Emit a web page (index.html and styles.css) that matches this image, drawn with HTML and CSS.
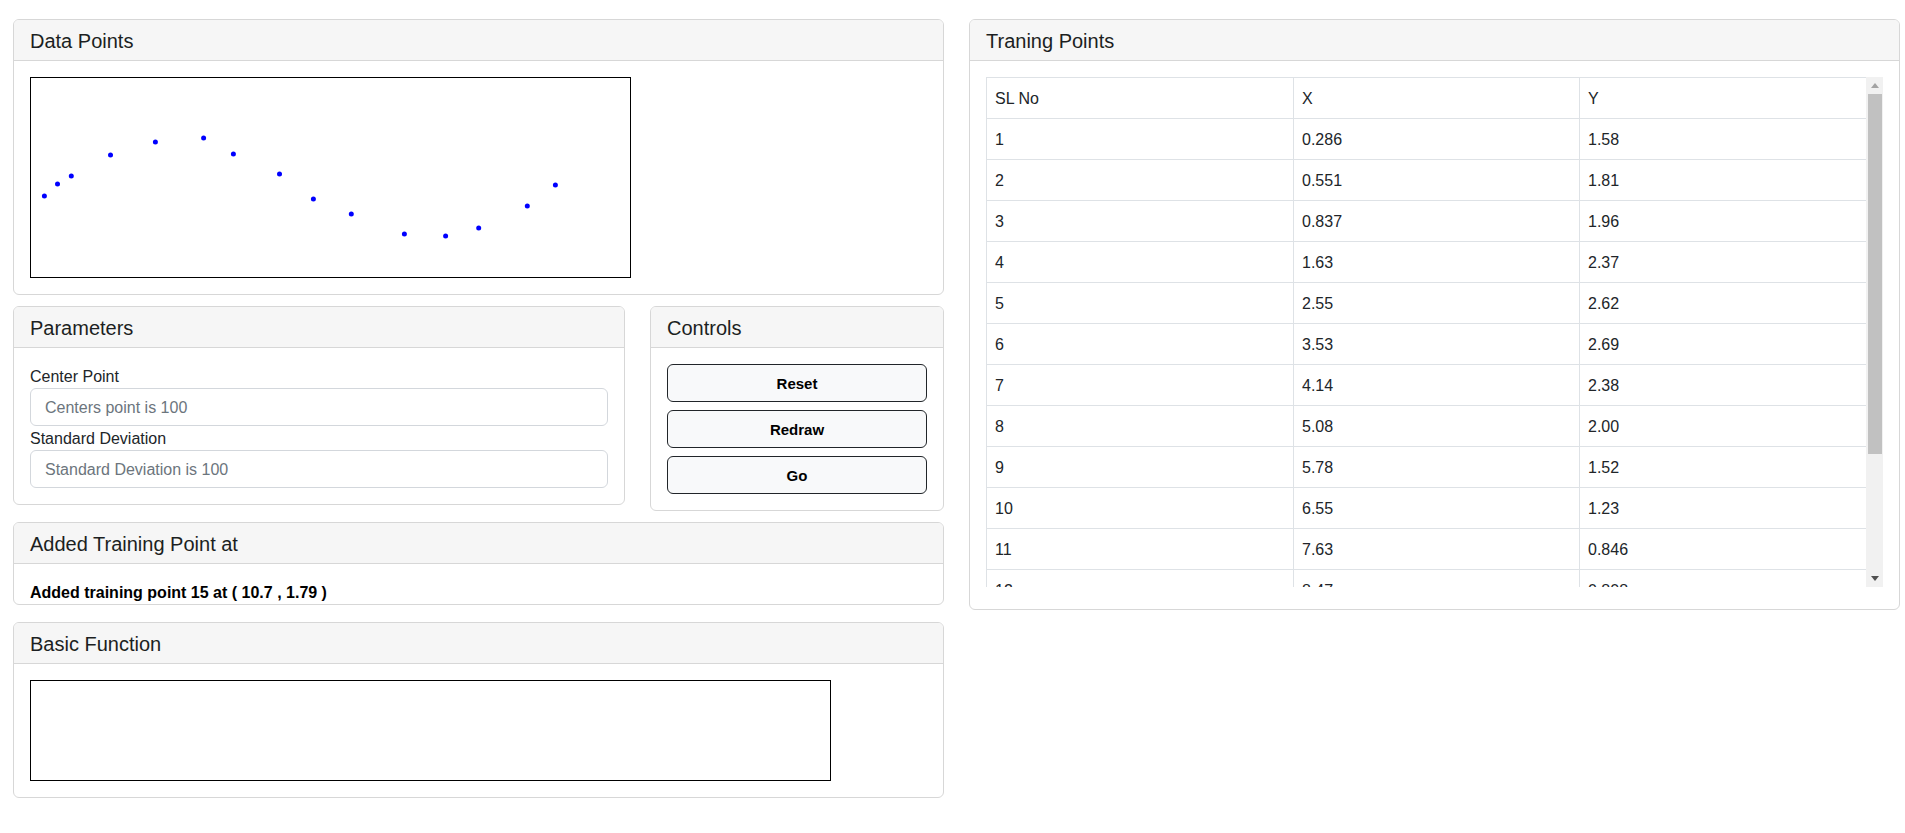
FILE: index.html
```html
<!DOCTYPE html>
<html lang="en">
<head>
<meta charset="utf-8">
<title>RBF Network</title>
<link rel="stylesheet" href="styles.css">
</head>
<body>
<div class="page">
  <div class="col col-left">
    <div class="card card-data">
      <div class="card-header"><h5 class="card-title">Data Points</h5></div>
      <div class="card-body">
        <div class="canvas canvas-data">
          <svg class="plot" width="599" height="199" viewBox="0 0 599 199">
            <g fill="#0000ff">
              <circle cx="13.4" cy="118" r="2.5"/>
              <circle cx="26.5" cy="106" r="2.5"/>
              <circle cx="40.3" cy="98" r="2.5"/>
              <circle cx="79.5" cy="77" r="2.5"/>
              <circle cx="124.4" cy="64" r="2.5"/>
              <circle cx="172.6" cy="60" r="2.5"/>
              <circle cx="202.4" cy="76" r="2.5"/>
              <circle cx="248.5" cy="96" r="2.5"/>
              <circle cx="282.4" cy="121" r="2.5"/>
              <circle cx="320.3" cy="136" r="2.5"/>
              <circle cx="373.4" cy="156" r="2.5"/>
              <circle cx="414.6" cy="158" r="2.5"/>
              <circle cx="447.7" cy="150" r="2.5"/>
              <circle cx="496.3" cy="128" r="2.5"/>
              <circle cx="524.4" cy="107" r="2.5"/>
            </g>
          </svg>
        </div>
      </div>
    </div>

    <div class="row-pc">
      <div class="card card-params">
        <div class="card-header"><h5 class="card-title">Parameters</h5></div>
        <div class="card-body">
          <label class="form-label" for="center">Center Point</label>
          <input class="form-control" id="center" type="text" placeholder="Centers point is 100">
          <label class="form-label" for="sd">Standard Deviation</label>
          <input class="form-control" id="sd" type="text" placeholder="Standard Deviation is 100">
        </div>
      </div>
      <div class="card card-controls">
        <div class="card-header"><h5 class="card-title">Controls</h5></div>
        <div class="card-body buttons">
          <button class="btn" type="button">Reset</button>
          <button class="btn" type="button">Redraw</button>
          <button class="btn" type="button">Go</button>
        </div>
      </div>
    </div>

    <div class="card card-added">
      <div class="card-header"><h5 class="card-title">Added Training Point at</h5></div>
      <div class="card-body">
        <p class="added-text">Added training point 15 at ( 10.7 , 1.79 )</p>
      </div>
    </div>

    <div class="card card-basic">
      <div class="card-header"><h5 class="card-title">Basic Function</h5></div>
      <div class="card-body">
        <div class="canvas canvas-basic"></div>
      </div>
    </div>
  </div>

  <div class="col col-right">
    <div class="card card-train">
      <div class="card-header"><h5 class="card-title">Traning Points</h5></div>
      <div class="card-body train-body">
        <div class="scroll-wrap">
          <div class="table-viewport">
            <table class="table">
              <thead>
                <tr><th class="c1">SL No</th><th class="c2">X</th><th class="c3">Y</th></tr>
              </thead>
              <tbody>
                <tr><td>1</td><td>0.286</td><td>1.58</td></tr>
                <tr><td>2</td><td>0.551</td><td>1.81</td></tr>
                <tr><td>3</td><td>0.837</td><td>1.96</td></tr>
                <tr><td>4</td><td>1.63</td><td>2.37</td></tr>
                <tr><td>5</td><td>2.55</td><td>2.62</td></tr>
                <tr><td>6</td><td>3.53</td><td>2.69</td></tr>
                <tr><td>7</td><td>4.14</td><td>2.38</td></tr>
                <tr><td>8</td><td>5.08</td><td>2.00</td></tr>
                <tr><td>9</td><td>5.78</td><td>1.52</td></tr>
                <tr><td>10</td><td>6.55</td><td>1.23</td></tr>
                <tr><td>11</td><td>7.63</td><td>0.846</td></tr>
                <tr><td>12</td><td>8.47</td><td>0.808</td></tr>
                <tr><td>13</td><td>9.15</td><td>0.968</td></tr>
                <tr><td>14</td><td>10.1</td><td>1.39</td></tr>
                <tr><td>15</td><td>10.7</td><td>1.79</td></tr>
              </tbody>
            </table>
          </div>
          <div class="vscroll" aria-hidden="true">
            <div class="vs-btn">
              <svg width="8" height="5" viewBox="0 0 8 5"><path d="M0 5 L4 0 L8 5 Z" fill="#a3a3a3"/></svg>
            </div>
            <div class="vs-track"><div class="vs-thumb"></div></div>
            <div class="vs-btn">
              <svg width="8" height="5" viewBox="0 0 8 5"><path d="M0 0 L8 0 L4 5 Z" fill="#505050"/></svg>
            </div>
          </div>
        </div>
      </div>
    </div>
  </div>
</div>
</body>
</html>
```

FILE: styles.css
```css
* {
  box-sizing: border-box;
}

html, body {
  margin: 0;
  background: #ffffff;
}

body {
  font-family: "Liberation Sans", Arial, sans-serif;
  font-size: 16px;
  line-height: 24px;
  color: #212529;
}

.page {
  display: flex;
  gap: 25px;
  padding: 19px 5px 0 13px;
}

.col {
  width: 931px;
  flex: 0 0 931px;
  display: flex;
  flex-direction: column;
}

/* ---------- cards ---------- */
.card {
  background: #ffffff;
  border: 1px solid #d7d7d7;
  border-radius: 6px;
  overflow: hidden;
}

.card-header {
  background: #f6f6f6;
  border-bottom: 1px solid #d7d7d7;
  padding: 9px 16px 7px 16px;
}

.card-title {
  margin: 0;
  font-size: 20px;
  line-height: 24px;
  font-weight: 400;
  color: #1c1f22;
}

.card-body {
  padding: 16px;
}

/* ---------- canvases ---------- */
.canvas {
  border: 1px solid #000000;
  background: #ffffff;
}

.canvas-data {
  width: 601px;
  height: 201px;
}

.plot {
  display: block;
}

.canvas-basic {
  width: 801px;
  height: 101px;
}

/* ---------- parameters / controls row ---------- */
.row-pc {
  display: flex;
  align-items: flex-start;
  gap: 25px;
  margin-top: 11px;
}

.card-params {
  width: 612px;
  flex: 0 0 612px;
}

.card-controls {
  width: 294px;
  flex: 0 0 294px;
}

.form-label {
  display: block;
  height: 24px;
  padding-top: 2px;
  font-size: 16px;
  line-height: 22px;
  color: #212529;
}

.form-control {
  display: block;
  width: 100%;
  height: 38px;
  padding: 7px 14px 5px 14px;
  font-family: inherit;
  font-size: 16px;
  line-height: 24px;
  color: #212529;
  background: #ffffff;
  border: 1px solid #d3d7dc;
  border-radius: 6px;
  outline: none;
}

.form-control::placeholder {
  color: #6c757d;
}

.buttons {
  display: flex;
  flex-direction: column;
  gap: 8px;
}

.btn {
  display: block;
  width: 100%;
  height: 38px;
  padding: 2px 12px 0 12px;
  font-family: inherit;
  font-size: 15px;
  font-weight: 700;
  line-height: 24px;
  color: #000000;
  background: #f8f9fa;
  border: 1px solid #212529;
  border-radius: 6px;
  text-align: center;
}

/* ---------- added training point ---------- */
.card-added {
  margin-top: 11px;
  height: 83px;
}

.added-text {
  margin: 0;
  padding-top: 1px;
  font-weight: 700;
  font-size: 16px;
  line-height: 24px;
  color: #000000;
}

.card-basic {
  margin-top: 17px;
}

/* ---------- training table ---------- */
.train-body {
  padding: 16px 16px 22px 16px;
}

.scroll-wrap {
  display: flex;
  height: 510px;
}

.table-viewport {
  flex: 1 1 auto;
  overflow: hidden;
}

.table {
  width: 880px;
  table-layout: fixed;
  border-collapse: collapse;
  margin-bottom: 16px;
  color: #212529;
}

.table th,
.table td {
  border: 1px solid #dee2e6;
  padding: 9px 8px 7px 8px;
  font-size: 16px;
  font-weight: 400;
  line-height: 24px;
  text-align: left;
  vertical-align: top;
}

.c1 { width: 307px; }
.c2 { width: 286px; }
.c3 { width: 287px; }

/* ---------- drawn scrollbar ---------- */
.vscroll {
  flex: 0 0 17px;
  width: 17px;
  display: flex;
  flex-direction: column;
  background: #f1f1f1;
}

.vs-btn {
  flex: 0 0 17px;
  height: 17px;
  display: flex;
  align-items: center;
  justify-content: center;
}

.vs-btn svg {
  display: block;
}

.vs-track {
  flex: 1 1 auto;
  padding: 0 1px 0 2px;
}

.vs-thumb {
  height: 360px;
  background: #c1c1c1;
}
```
